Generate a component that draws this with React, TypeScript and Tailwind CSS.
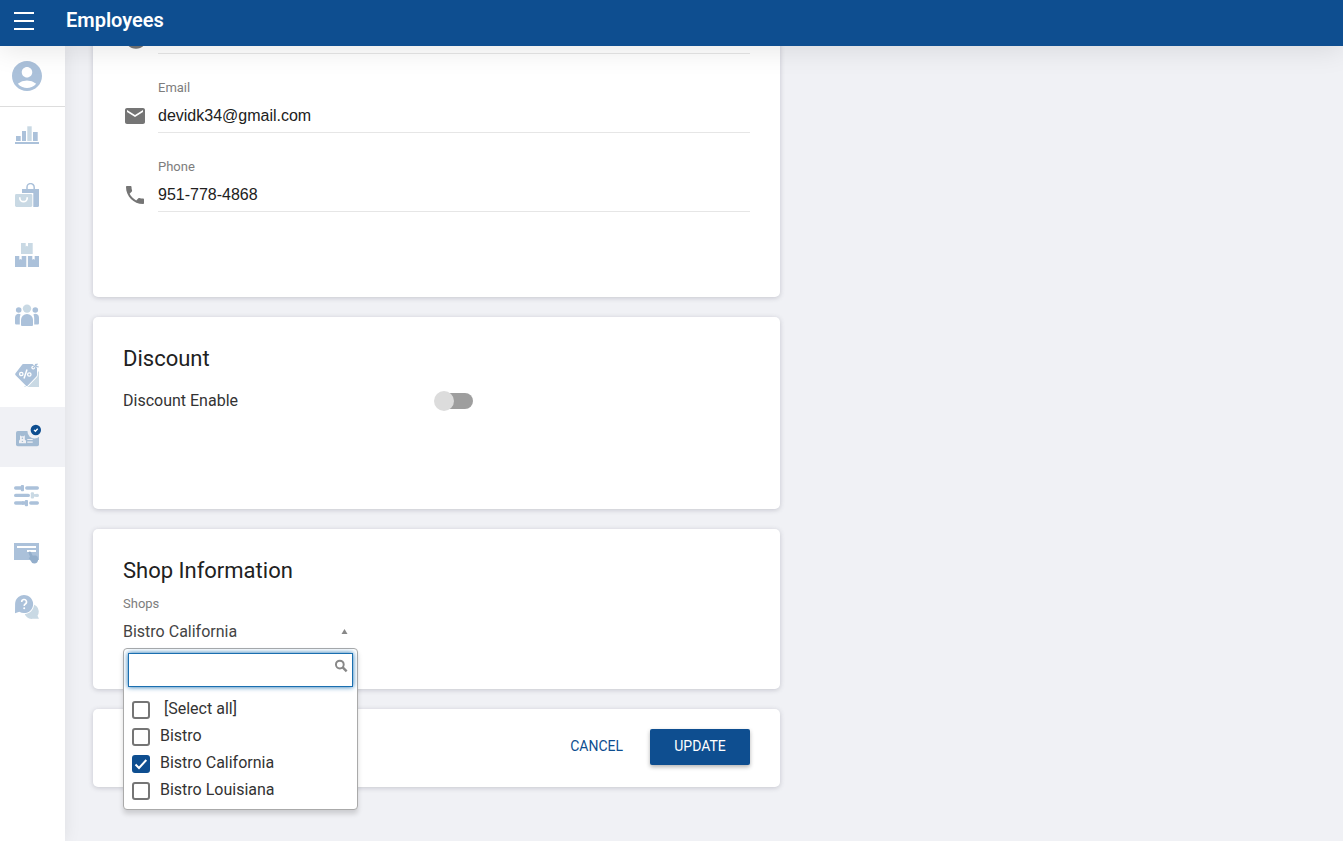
import { useState, type ReactNode } from "react";
import { MdAccountCircle, MdEmail, MdInfo, MdPhone } from "react-icons/md";

const DARK = "#abc1da";
const LIGHT = "#c9d9e4";

function NavIcon({ children }: { children: ReactNode }) {
  return (
    <svg width="28" height="24" viewBox="0 0 28 24" fill={DARK} aria-hidden="true">
      {children}
    </svg>
  );
}

const navItems: { label: string; active?: boolean; icon: ReactNode }[] = [
  {
    label: "Reports",
    icon: (
      <NavIcon>
        <rect x="3" y="13" width="4.700" height="5" />
        <rect x="9" y="8" width="4" height="10" />
        <rect x="14.300" y="3.300" width="4.400" height="14.700" fill={LIGHT} />
        <rect x="20" y="9" width="4.700" height="9" />
        <rect x="2" y="19" width="24" height="2" />
      </NavIcon>
    ),
  },
  {
    label: "Sales",
    icon: (
      <NavIcon>
        <path d="M14 7V4.200a3.600 3.600 0 0 1 7.200 0V7" fill="none" stroke={DARK} strokeWidth="1.500" />
        <path d="M9 6h17v16.500a1.500 1.500 0 0 1-1.500 1.500H9z" />
        <path d="M1 10h19.300v14H1z" fill="#fff" />
        <rect x="2" y="11" width="17.300" height="13" rx="1.400" fill={LIGHT} />
        <path d="M6.800 14.200v.8a3.700 3.700 0 0 0 7.400 0v-.8" fill="none" stroke="#fff" strokeWidth="1.700" />
      </NavIcon>
    ),
  },
  {
    label: "Inventory",
    icon: (
      <NavIcon>
        <path d="M8 0h4.700v3.600l1.150-.8 1.150.8V0h4.700v11H8z" fill={LIGHT} />
        <path d="M2 13h4.300v3.800l1.200-.8 1.200.8V13h4.600v11H2z" />
        <path d="M14.900 13h4.400v3.800l1.200-.8 1.200.8V13H26v11H14.900z" />
      </NavIcon>
    ),
  },
  {
    label: "Customers",
    icon: (
      <NavIcon>
        <circle cx="14" cy="5.600" r="4.200" fill={LIGHT} />
        <circle cx="5.700" cy="7" r="2.800" />
        <circle cx="22.300" cy="7" r="2.800" />
        <path d="M8 22v-5a6 6 0 0 1 12 0v5q0 1-1 1H9q-1 0-1-1z" />
        <path d="M7.600 11.400A8 8 0 0 0 6.800 15v6.500H3.200Q2 21.500 2 20.300V14.700a3.600 3.600 0 0 1 5.600-3.300z" />
        <path d="M20.400 11.400A8 8 0 0 1 21.200 15v6.500h3.600q1.200 0 1.200-1.200V14.700a3.600 3.600 0 0 0-5.600-3.300z" />
      </NavIcon>
    ),
  },
  {
    label: "Promotions",
    icon: (
      <NavIcon>
        <path d="M26 8v16H11z" fill={LIGHT} />
        <path
          d="M9.500 1.300L2.500 10.300q-.8 1 .1 2l10.200 10.300q1 1 2 0l8.600-9q.6-.6.600-1.500V5L19.500 1H10.500q-.6 0-1 .3z"
          stroke="#fff"
          strokeWidth="1.600"
          paintOrder="stroke"
        />
        <circle cx="8.300" cy="11" r="1.700" fill="none" stroke="#fff" strokeWidth="1.300" />
        <circle cx="16.300" cy="11.500" r="1.700" fill="none" stroke="#fff" strokeWidth="1.300" />
        <path d="M14 6.600L11 15.600" stroke="#fff" strokeWidth="1.500" />
        <circle cx="20.200" cy="4.600" r="1.900" fill="#fff" />
        <path d="M19.800 5l4.700-4.300M22.300 1l1 2.400 2.400.6" fill="none" stroke={DARK} strokeWidth="1.200" />
      </NavIcon>
    ),
  },
  {
    label: "Employees",
    active: true,
    icon: (
      <NavIcon>
        <rect x="3" y="8" width="23" height="15.300" rx="1.800" fill="#a3bbd3" />
        <circle cx="21.500" cy="8.500" r="7" fill="#f0f1f5" />
        <path d="M7 12.200l1.200 1h2.400l1.200-1v4.300l1.200 1.200v2.600H6v-2.600l1-1.200z" fill="#f0f1f5" />
        <circle cx="9.400" cy="15.300" r=".8" fill="#a3bbd3" />
        <path d="M8.800 18.400h1.300" stroke="#a3bbd3" />
        <path d="M14.300 16.500h5.400M14.300 19.200h5.400" stroke="#f0f1f5" strokeWidth="1.200" />
        <circle cx="22.800" cy="7" r="5.200" fill="#0e4e90" />
        <path d="M21 6.900l1.400 1.400 2.300-2.600" fill="none" stroke="#fff" strokeWidth="1.300" />
      </NavIcon>
    ),
  },
  {
    label: "Settings",
    icon: (
      <NavIcon>
        <g fill="none" stroke={DARK} strokeWidth="3.400" strokeLinecap="round">
          <path d="M2.700 5h5.300M13.800 5h10.500M2.700 12.400h12.600M2.700 20h7.300M17.800 20h6.500" />
          <path d="M23.800 12.400h.500" stroke={LIGHT} />
        </g>
        <rect x="7.800" y="2" width="3.200" height="6.200" rx="1" />
        <rect x="17.800" y="9.200" width="3.200" height="6.400" rx="1" fill={LIGHT} />
        <path d="M20.500 12.400h3.500" stroke={LIGHT} strokeWidth="2.600" />
        <path d="M9 20h3.500" stroke={DARK} strokeWidth="3.400" />
        <rect x="11.800" y="17" width="3.200" height="6.200" rx="1" />
      </NavIcon>
    ),
  },
  {
    label: "Display",
    icon: (
      <NavIcon>
        <rect x="1" y="0" width="25" height="17" />
        <path d="M4 4h19M14 8h9" stroke="#fff" strokeWidth="2" />
        <path
          d="M15.400 9.600q1-1.800 2.600-.6l1.500 3.400 3.600.2q2.200.8 2.100 3.300-.2 4.600-4 4.700-2.400-.2-3.200-2.400l-2.300-3.200 1.400-1z"
          fill="#93aecb"
        />
      </NavIcon>
    ),
  },
  {
    label: "Help",
    icon: (
      <NavIcon>
        <path d="M26 23.800h-6.500a7.300 7.300 0 1 1 6.300-7.600q0 2.800-1.300 4.600z" fill={LIGHT} />
        <path
          d="M2 18.200l.1-9.200a9 9 0 1 1 4.200 7.700z"
          stroke="#fff"
          strokeWidth="2"
          paintOrder="stroke"
        />
        <path
          d="M8.700 7a2.400 2.400 0 1 1 3.600 2q-1.100.7-1.100 1.900"
          fill="none"
          stroke="#fff"
          strokeWidth="1.600"
        />
        <circle cx="11.200" cy="13.200" r="1" fill="#fff" />
      </NavIcon>
    ),
  },
];

function Card({ className = "", children }: { className?: string; children: ReactNode }) {
  return (
    <section
      className={`rounded-[5px] bg-white px-[30px] shadow-[0_1px_5px_rgba(60,60,80,0.24)] ${className}`}
    >
      {children}
    </section>
  );
}

function Field(props: { id: string; label: string; type: string; value: string; icon: ReactNode }) {
  return (
    <div className="flex h-[79px] items-end">
      <div className="flex h-[29px] w-[35px] shrink-0 items-start text-[#757575]">{props.icon}</div>
      <div className="flex grow flex-col">
        <label htmlFor={props.id} className="text-[13px] leading-5 text-[#7d7d7d]">
          {props.label}
        </label>
        <input
          id={props.id}
          type={props.type}
          defaultValue={props.value}
          className="h-[35px] w-full border-b border-[#e6e6e6] bg-transparent pt-0.5 font-['Liberation_Sans',Arial,sans-serif] text-base text-[#212121] outline-none"
        />
      </div>
    </div>
  );
}

const shops = ["Bistro", "Bistro California", "Bistro Louisiana"];

function Option(props: { label: string; checked: boolean; wide?: boolean; onChange: () => void }) {
  return (
    <label className="flex h-[27px] items-center text-base text-[#333]">
      <input type="checkbox" checked={props.checked} onChange={props.onChange} className="peer sr-only" />
      <span className="mt-0.5 flex size-[18px] shrink-0 items-center justify-center rounded-[3px] border-2 border-[#757575] text-transparent peer-checked:border-[#0e4e90] peer-checked:bg-[#0e4e90] peer-checked:text-white">
        <svg width="14" height="14" viewBox="0 0 14 14" fill="none" stroke="currentColor" strokeWidth="2">
          <path d="M1.500 7.500l3.500 3.500 7.300-8" />
        </svg>
      </span>
      <span className={props.wide ? "pl-3.5" : "pl-2.5"}>{props.label}</span>
    </label>
  );
}

export default function App() {
  const [selected, setSelected] = useState<string[]>(["Bistro California"]);
  const [open, setOpen] = useState(true);
  const toggle = (name: string) =>
    setSelected((s) => (s.includes(name) ? s.filter((n) => n !== name) : [...s, name]));
  const all = selected.length === shops.length;

  return (
    <div className="flex min-h-screen flex-col bg-[#f0f1f5] font-[Roboto,sans-serif] text-[#212121]">
      <header className="relative z-20 flex h-[46px] items-center bg-[#0e4e90] pl-3.5 text-white shadow-[0_4px_28px_rgba(0,0,0,0.10)]">
        <button type="button" aria-label="Open menu" className="flex w-5 flex-col gap-1.5 pb-1">
          <span className="h-0.5 bg-white" />
          <span className="h-0.5 bg-white" />
          <span className="h-0.5 bg-white" />
        </button>
        <h1 className="pb-1.5 pl-8 text-xl font-semibold">Employees</h1>
      </header>

      <div className="flex grow">
        <nav className="relative z-10 w-[65px] shrink-0 bg-white shadow-[0_0_16px_rgba(0,0,0,0.08)]">
          <a
            href="#profile"
            aria-label="Profile"
            className="flex h-[61px] items-center border-b border-[#dddddd] pl-[9px] text-[#abc1da]"
          >
            <MdAccountCircle size={36} />
          </a>
          {navItems.map((item) => (
            <a
              key={item.label}
              href={`#${item.label.toLowerCase()}`}
              aria-label={item.label}
              className={`flex pl-[13px] pt-4 ${item.label === "Display" ? "h-[52px]" : "h-[60px]"} ${
                item.active ? "bg-[#f0f1f5]" : ""
              }`}
            >
              {item.icon}
            </a>
          ))}
        </nav>

        <main className="min-w-0 grow px-7">
          <form className="flex w-full max-w-[687px] flex-col gap-5" onSubmit={(e) => e.preventDefault()}>
            <Card className="-mt-[71px] pb-[85px]">
              <Field id="name" label="Name" type="text" value="" icon={<MdInfo size={26} />} />
              <Field id="email" label="Email" type="email" value="devidk34@gmail.com" icon={<MdEmail size={24} />} />
              <Field id="phone" label="Phone" type="tel" value="951-778-4868" icon={<MdPhone size={24} />} />
            </Card>

            <Card className="h-48 pt-[26px]">
              <h2 className="text-[22px] leading-8">Discount</h2>
              <label className="flex items-center pt-3.5 text-base text-[#333]">
                <span className="w-[311px] leading-6">Discount Enable</span>
                <input type="checkbox" role="switch" className="peer sr-only" />
                <span className="flex h-4 w-[39px] items-center rounded-full bg-[linear-gradient(to_right,transparent_10px,#9e9e9e_10px)] peer-checked:justify-end">
                  <span className="size-5 shrink-0 rounded-full bg-[#dcdcdc]" />
                </span>
              </label>
            </Card>

            <Card className="h-40 pt-[26px]">
              <h2 className="text-[22px] leading-8">Shop Information</h2>
              <div className="relative flex w-[235px] flex-col pt-[7px]">
                <label htmlFor="shops" className="text-[13px] leading-5 text-[#7d7d7d]">
                  Shops
                </label>
                <button
                  id="shops"
                  type="button"
                  aria-expanded={open}
                  onClick={() => setOpen(!open)}
                  className="flex h-[34px] items-center justify-between pt-0.5 pr-2.5 text-base text-[#444]"
                >
                  <span className="truncate">{selected.join(", ")}</span>
                  <svg width="7" height="6" viewBox="0 0 7 6" fill="#888" aria-hidden="true">
                    <path d="M3.500 0L6.500 5H.5z" />
                  </svg>
                </button>
                {open && (
                  <div className="absolute top-full left-0 z-10 w-full rounded-[4px] border border-[#aaa] bg-white p-1 pb-1.5 shadow-[0_4px_5px_rgba(0,0,0,0.15)]">
                    <div className="flex h-[34px] border border-[#1a6fb0] shadow-[0_0_5px_#1a6fb0]">
                      <input type="text" aria-label="Search shops" className="min-w-0 grow px-1 outline-none" />
                      <svg width="14" height="14" viewBox="0 0 14 14" fill="none" stroke="#888" className="mt-[5px] mr-1">
                        <circle cx="6" cy="5.500" r="4" strokeWidth="2" />
                        <path d="M9 8.500l4 4" strokeWidth="2.500" />
                      </svg>
                    </div>
                    <div className="flex flex-col px-1 pt-2">
                      <Option wide label="[Select all]" checked={all} onChange={() => setSelected(all ? [] : shops)} />
                      {shops.map((name) => (
                        <Option
                          key={name}
                          label={name}
                          checked={selected.includes(name)}
                          onChange={() => toggle(name)}
                        />
                      ))}
                    </div>
                  </div>
                )}
              </div>
            </Card>

            <Card className="flex h-[78px] items-start justify-end gap-3 pt-5">
              <button type="button" className="h-9 px-[15px] pb-0.5 text-sm text-[#0e4e90]">
                CANCEL
              </button>
              <button
                type="submit"
                className="h-9 w-[100px] rounded-[2px] bg-[#0e4e90] pb-0.5 text-sm text-white shadow-[0_2px_4px_rgba(0,0,0,0.3)]"
              >
                UPDATE
              </button>
            </Card>
          </form>
        </main>
      </div>
    </div>
  );
}
